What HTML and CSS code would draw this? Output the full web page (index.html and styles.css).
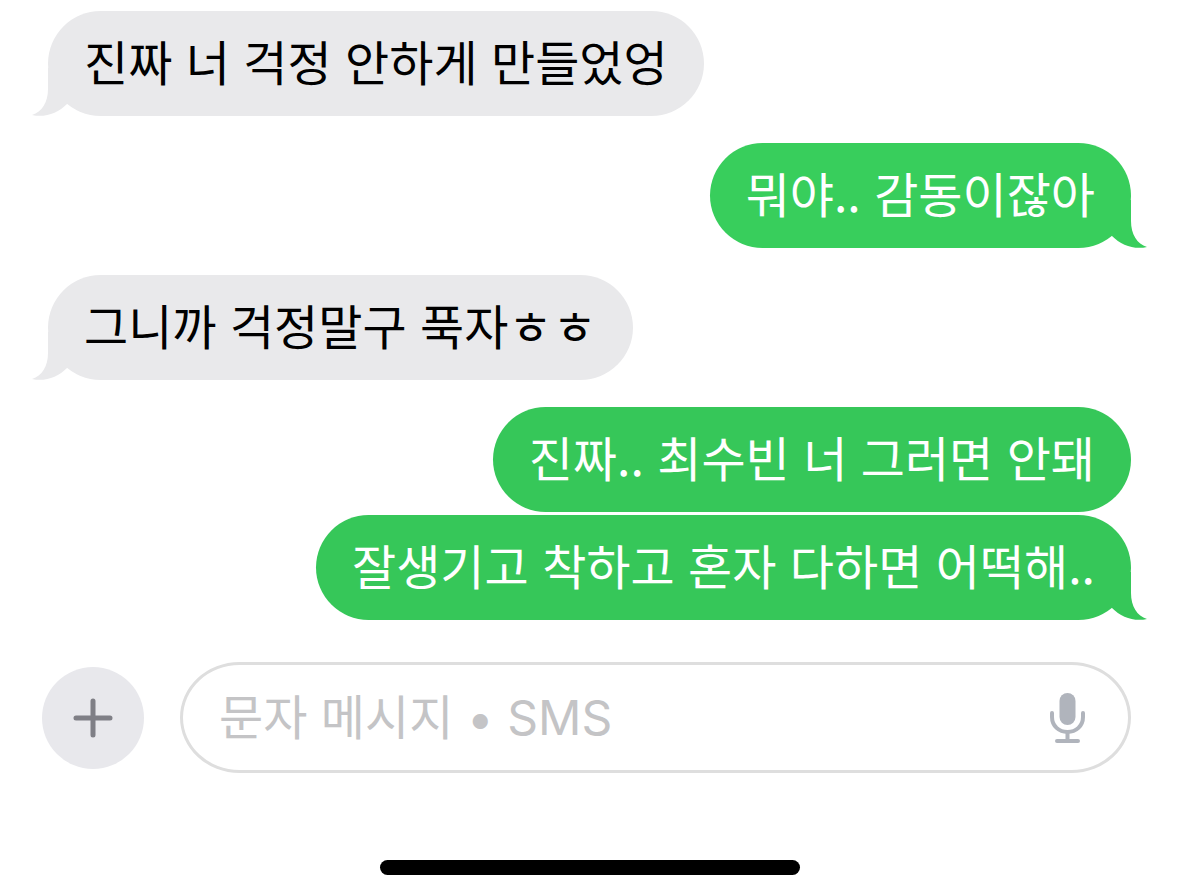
FILE: index.html
```html
<!DOCTYPE html>
<html lang="ko">

<head>
    <meta charset="UTF-8">
    <meta name="viewport" content="width=device-width, initial-scale=1.0">
    <title>메시지</title>
    <link rel="stylesheet" href="styles.css">
</head>

<body>
    <main class="chat">
        <div class="bubble received">
            진짜 너 걱정 안하게 만들었엉
            <svg class="tail" viewBox="0 0 36 48"><path d="M16 0 V21 C16 34 10 44 0 47 C13 50 26 45 35 36 V0 Z" /></svg>
        </div>
        <div class="bubble sent">
            뭐야.. 감동이잖아
            <svg class="tail" viewBox="0 0 36 48"><path d="M16 0 V21 C16 34 10 44 0 47 C13 50 26 45 35 36 V0 Z" /></svg>
        </div>
        <div class="bubble received">
            그니까 걱정말구 푹자ㅎㅎ
            <svg class="tail" viewBox="0 0 36 48"><path d="M16 0 V21 C16 34 10 44 0 47 C13 50 26 45 35 36 V0 Z" /></svg>
        </div>
        <div class="bubble sent lower">진짜.. 최수빈 너 그러면 안돼</div>
        <div class="bubble sent lower last">
            잘생기고 착하고 혼자 다하면 어떡해..
            <svg class="tail" viewBox="0 0 36 48"><path d="M16 0 V21 C16 34 10 44 0 47 C13 50 26 45 35 36 V0 Z" /></svg>
        </div>
    </main>

    <form class="composer">
        <button class="add" type="button" aria-label="추가">
            <svg viewBox="0 0 40 40"><path d="M20 3 V37 M3 20 H37" /></svg>
        </button>
        <div class="field">
            <input type="text" aria-label="문자 메시지" placeholder="문자 메시지 • SMS">
            <button class="mic" type="button" aria-label="음성 입력">
                <svg viewBox="0 0 35 50">
                    <rect class="mic-body" x="9.5" y="0" width="16" height="32" rx="8" />
                    <path d="M2 20 V24 C2 33 9 39 17.5 39 C26 39 33 33 33 24 V20 M17.5 39 V48 M7 48 H28" />
                </svg>
            </button>
        </div>
    </form>

    <div class="home-bar"></div>
</body>

</html>
```

FILE: styles.css
```css
* {
    box-sizing: border-box;
}

body {
    margin: 0;
    background-color: #fff;
    font-family: "Noto Sans CJK KR", sans-serif;
}

.chat {
    display: flex;
    flex-direction: column;
    padding: 11px 48px 0;
}

.bubble {
    position: relative;
    margin-bottom: 27px;
    padding: 0 36px 7px;
    border-radius: 53px;
    font-size: 48px;
    line-height: 98px;
    white-space: nowrap;
}

.received {
    align-self: flex-start;
    background-color: #e9e9eb;
    color: #000;
}

.sent {
    align-self: flex-end;
    background-color: #38ce5c;
    color: #fff;
}

.lower {
    background-color: #36c759;
    margin-bottom: 3px;
}

.last {
    margin-bottom: 0;
}

.tail {
    position: absolute;
    left: -16px;
    bottom: 0;
    width: 36px;
    height: 48px;
    fill: #e9e9eb;
}

.sent .tail {
    left: auto;
    right: -16px;
    transform: scaleX(-1);
    fill: #38ce5c;
}

.lower .tail {
    fill: #36c759;
}

.composer {
    display: flex;
    align-items: center;
    gap: 36px;
    margin-top: 42px;
    padding: 0 48px 0 42px;
}

button {
    padding: 0;
    border: none;
    background: none;
}

.add {
    display: flex;
    align-items: center;
    justify-content: center;
    width: 102px;
    height: 102px;
    border-radius: 50%;
    background-color: #e8e8ec;
}

.add svg {
    width: 40px;
    height: 40px;
    fill: none;
    stroke: #7f7f86;
    stroke-width: 5;
    stroke-linecap: round;
}

.field {
    flex: 1;
    display: flex;
    align-items: center;
    height: 111px;
    padding: 0 43px 0 36px;
    border: 3px solid #dedede;
    border-radius: 60px / 56px;
}

.field input {
    flex: 1;
    min-width: 0;
    padding: 0;
    border: none;
    outline: none;
    background: none;
    font-family: Inter, "Noto Sans CJK KR", sans-serif;
    font-size: 48px;
}

.field input::placeholder {
    color: #c4c4c6;
    opacity: 1;
}

.mic svg {
    display: block;
    width: 35px;
    height: 50px;
    fill: none;
    stroke: #b0b4bc;
    stroke-width: 4;
    stroke-linecap: round;
}

.mic .mic-body {
    fill: #b0b4bc;
    stroke: none;
}

.home-bar {
    width: 420px;
    height: 15px;
    margin: 87px auto 0;
    border-radius: 8px;
    background-color: #000;
}
```
